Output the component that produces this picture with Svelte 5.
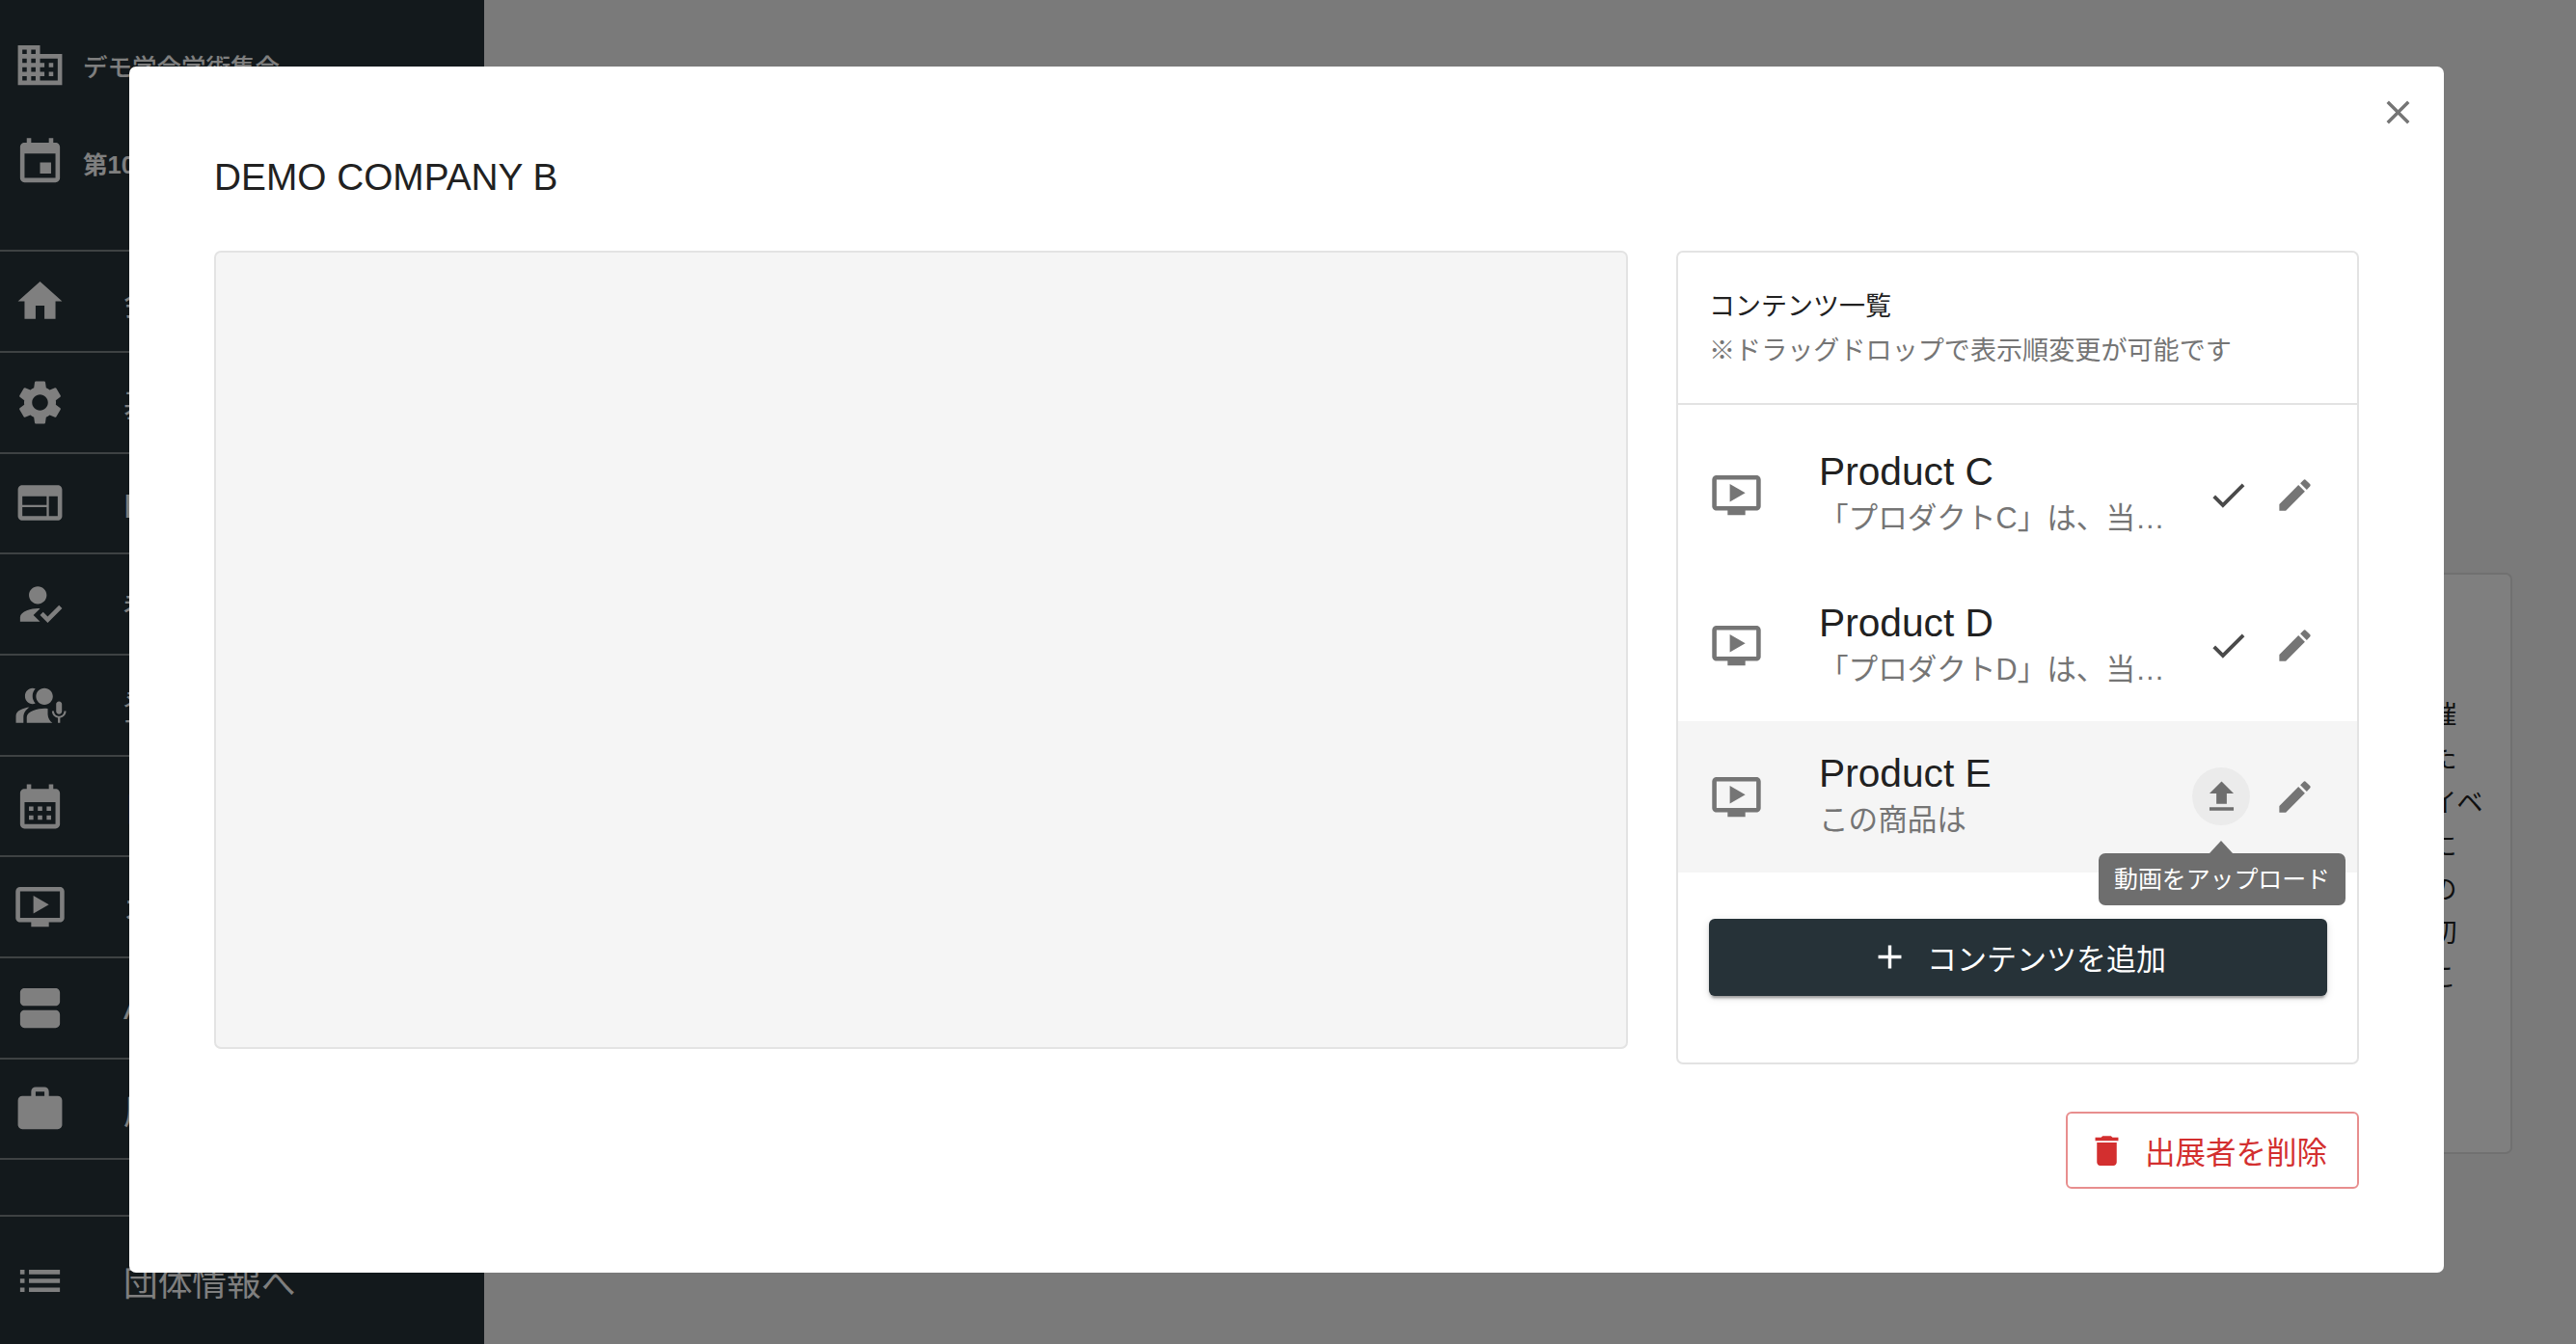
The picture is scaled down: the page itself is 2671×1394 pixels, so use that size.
<script>
  const icons = {
    domain: 'M12 7V3H2v18h20V7H12zM6 19H4v-2h2v2zm0-4H4v-2h2v2zm0-4H4V9h2v2zm0-4H4V5h2v2zm4 12H8v-2h2v2zm0-4H8v-2h2v2zm0-4H8V9h2v2zm0-4H8V5h2v2zm10 12h-8v-2h2v-2h-2v-2h2v-2h-2V9h8v10zm-2-8h-2v2h2v-2zm0 4h-2v2h2v-2z',
    event: 'M17 12h-5v5h5v-5zM16 1v2H8V1H6v2H5c-1.11 0-1.99.9-1.99 2L3 19c0 1.1.89 2 2 2h14c1.1 0 2-.9 2-2V5c0-1.1-.9-2-2-2h-1V1h-2zm3 18H5V8h14v11z',
    home: 'M10 20v-6h4v6h5v-8h3L12 3 2 12h3v8z',
    settings: 'M19.14 12.94c.04-.3.06-.61.06-.94 0-.32-.02-.64-.07-.94l2.03-1.58c.18-.14.23-.41.12-.61l-1.92-3.32c-.12-.22-.37-.29-.59-.22l-2.39.96c-.5-.38-1.03-.7-1.62-.94l-.36-2.54c-.04-.24-.24-.41-.48-.41h-3.84c-.24 0-.43.17-.47.41l-.36 2.54c-.59.24-1.13.57-1.62.94l-2.39-.96c-.22-.08-.47 0-.59.22L2.74 8.87c-.12.21-.08.47.12.61l2.03 1.58c-.05.3-.09.63-.09.94s.02.64.07.94l-2.03 1.58c-.18.14-.23.41-.12.61l1.92 3.32c.12.22.37.29.59.22l2.39-.96c.5.38 1.03.7 1.62.94l.36 2.54c.05.24.24.41.48.41h3.84c.24 0 .44-.17.47-.41l.36-2.54c.59-.24 1.13-.56 1.62-.94l2.39.96c.22.08.47 0 .59-.22l1.92-3.32c.12-.22.07-.47-.12-.61l-2.01-1.58zM12 15.6c-1.98 0-3.6-1.62-3.6-3.6s1.62-3.6 3.6-3.6 3.6 1.62 3.6 3.6-1.62 3.6-3.6 3.6z',
    web: 'M20 4H4c-1.1 0-1.99.9-1.99 2L2 18c0 1.1.9 2 2 2h16c1.1 0 2-.9 2-2V6c0-1.1-.9-2-2-2zm-5 14H4v-4h11v4zm0-5H4V9h11v4zm5 5h-4V9h4v9z',
    reg: 'M9 17l3-2.94c-.39-.04-.68-.06-1-.06-2.67 0-8 1.34-8 4v2h9l-3-3zm2-5c2.21 0 4-1.79 4-4s-1.79-4-4-4-4 1.79-4 4 1.79 4 4 4zM15.47 20.5L12 17l1.4-1.41 2.07 2.08 5.13-5.17 1.4 1.41z',
    speakers: 'M8.6 4.2c-1.9 0-3.4 1.6-3.4 3.6s1.5 3.6 3.4 3.6c.5 0 .9-.1 1.3-.3-.8-.9-1.3-2-1.3-3.3s.5-2.4 1.3-3.3c-.4-.2-.8-.3-1.3-.3zM14 4.2c-2.1 0-3.8 1.7-3.8 3.8s1.7 3.8 3.8 3.8 3.8-1.7 3.8-3.8-1.7-3.8-3.8-3.8zM7.2 12.9c-2.6.3-6.1 1.5-6.1 3.9v3.2h3.4v-2.6c0-1.9 1.1-3.3 2.7-4.5zM14 13.4c-2.8 0-8 1.4-8 3.9V20h11.6c-1.2-.9-2-2.3-2.1-3.9v-2.6c-.5-.1-1-.1-1.5-.1zM20.6 10.2c-.8 0-1.3.6-1.3 1.3v3.2c0 .7.5 1.3 1.3 1.3s1.3-.6 1.3-1.3v-3.2c0-.7-.5-1.3-1.3-1.3zM23.8 14.6h-.9c0 1.3-1 2.3-2.3 2.3s-2.3-1-2.3-2.3h-.9c0 1.6 1.2 2.9 2.7 3.1V20h1v-2.3c1.5-.2 2.7-1.5 2.7-3.1z',
    calendar: 'M19 4h-1V2h-2v2H8V2H6v2H5c-1.11 0-1.99.9-1.99 2L3 20c0 1.1.89 2 2 2h14c1.1 0 2-.9 2-2V6c0-1.1-.9-2-2-2zm0 16H5V10h14v10zM9 14H7v-2h2v2zm4 0h-2v-2h2v2zm4 0h-2v-2h2v2zm-8 4H7v-2h2v2zm4 0h-2v-2h2v2zm4 0h-2v-2h2v2z',
    video: 'M21 3H3c-1.11 0-2 .89-2 2v12c0 1.1.89 2 2 2h5v2h8v-2h5c1.1 0 1.99-.9 1.99-2L23 5c0-1.11-.9-2-2-2zm0 14H3V5h18v12zm-5-6l-7 4V7z',
    agenda: 'M19 13H5c-1.1 0-2 .9-2 2v4c0 1.1.9 2 2 2h14c1.1 0 2-.9 2-2v-4c0-1.1-.9-2-2-2zm0-10H5c-1.1 0-2 .9-2 2v4c0 1.1.9 2 2 2h14c1.1 0 2-.9 2-2V5c0-1.1-.9-2-2-2z',
    work: 'M20 6h-4V4c0-1.11-.89-2-2-2h-4c-1.11 0-2 .89-2 2v2H4c-1.11 0-1.99.89-1.99 2L2 19c0 1.11.89 2 2 2h16c1.11 0 2-.89 2-2V8c0-1.11-.89-2-2-2zm-6 0h-4V4h4v2z',
    list: 'M3 13h2v-2H3v2zm0 4h2v-2H3v2zm0-8h2V7H3v2zm4 4h14v-2H7v2zm0 4h14v-2H7v2zM7 7v2h14V7H7z',
    close: 'M19 6.41L17.59 5 12 10.59 6.41 5 5 6.41 10.59 12 5 17.59 6.41 19 12 13.41 17.59 19 19 17.59 13.41 12z',
    check: 'M9 16.17L4.83 12l-1.42 1.41L9 19 21 7l-1.41-1.41z',
    pencil: 'M3 17.25V21h3.75L17.81 9.94l-3.75-3.75L3 17.25zM20.71 7.04c.39-.39.39-1.02 0-1.41l-2.34-2.34c-.39-.39-1.02-.39-1.41 0l-1.83 1.83 3.75 3.75 1.83-1.83z',
    upload: 'M9 16h6v-6h4l-7-7-7 7h4zm-4 2h14v2H5z',
    plus: 'M19 13h-6v6h-2v-6H5v-2h6V5h2v6h6v2z',
    trash: 'M6 19c0 1.1.9 2 2 2h8c1.1 0 2-.9 2-2V7H6v12zM19 4h-3.5l-1-1h-5l-1 1H5v2h14V4z'
  };

  const navItems = [
    { icon: 'home', label: '会議' },
    { icon: 'settings', label: '基本設定' },
    { icon: 'web', label: 'HP編集' },
    { icon: 'reg', label: '参加者' },
    { icon: 'speakers', label: '登壇者' },
    { icon: 'calendar', label: '日程' },
    { icon: 'video', label: 'オンデマンド' },
    { icon: 'agenda', label: 'Ad' },
    { icon: 'work', label: '展示' }
  ];

  const bgLines = ['オンライン開催', '企画を作成した', '年次のウェブイベ', 'ントの案内時に', '各種資料などの', '受付登録の締切', 'の前日までにこ'];

  const contents = [
    { title: 'Product C', sub: '「プロダクトC」は、当社の新しい製品です', done: true },
    { title: 'Product D', sub: '「プロダクトD」は、当社の新しい製品です', done: true },
    { title: 'Product E', sub: 'この商品は', done: false }
  ];
</script>

{#snippet icon(name, cls)}
  <svg class={cls} viewBox="0 0 24 24" aria-hidden="true"><path d={icons[name]} /></svg>
{/snippet}

<div class="page" lang="ja">
  <aside class="sidebar">
    <div class="org">
      <div class="org-row">
        {@render icon('domain', 'nav-icon')}
        <span>デモ学会学術集会</span>
      </div>
      <div class="org-row strong">
        {@render icon('event', 'nav-icon')}
        <span>第10回学術集会</span>
      </div>
    </div>
    <nav>
      {#each navItems as item}
        <div class="nav-row">
          {@render icon(item.icon, 'nav-icon')}
          <span>{item.label}</span>
        </div>
      {/each}
    </nav>
    <div class="spacer"></div>
    <div class="back-row">
      {@render icon('list', 'nav-icon')}
      <span>団体情報へ</span>
    </div>
  </aside>

  <main class="main">
    <section class="bg-card">
      <div class="bg-head">
        <span>申込手</span>
        {@render icon('plus', 'bg-plus')}
      </div>
      {#each bgLines as line}
        <div class="bg-line">{line}</div>
      {/each}
    </section>
  </main>

  <div class="overlay">
    <div class="modal">
      <button class="close">{@render icon('close', 'close-icon')}</button>
      <h2>DEMO COMPANY B</h2>
      <div class="body">
        <div class="player"></div>
        <div class="panel">
          <header>
            <div class="panel-title">コンテンツ一覧</div>
            <div class="panel-note">※ドラッグドロップで表示順変更が可能です</div>
          </header>
          <ul>
            {#each contents as item}
              <li class:active={!item.done}>
                {@render icon('video', 'item-icon')}
                <div class="item-text">
                  <div class="item-title">{item.title}</div>
                  <div class="item-sub">{item.sub}</div>
                </div>
                <div class="slot">
                  {#if item.done}
                    {@render icon('check', 'check-icon')}
                  {:else}
                    <span class="upload-btn">{@render icon('upload', 'upload-icon')}</span>
                    <div class="tooltip">動画をアップロード</div>
                  {/if}
                </div>
                {@render icon('pencil', 'pencil-icon')}
              </li>
            {/each}
          </ul>
          <button class="add">
            {@render icon('plus', 'add-icon')}
            <span>コンテンツを追加</span>
          </button>
        </div>
      </div>
      <div class="footer">
        <button class="delete">
          {@render icon('trash', 'trash-icon')}
          <span>出展者を削除</span>
        </button>
      </div>
    </div>
  </div>
</div>

<style>
  :global(body) {
    margin: 0;
    font-family: "Liberation Sans", "Noto Sans CJK JP", sans-serif;
  }

  .page {
    display: flex;
    height: 1394px;
    overflow: hidden;
    background: #f5f5f5;
    color: #212121;
  }

  svg {
    display: block;
    flex: none;
    fill: currentColor;
  }

  .sidebar {
    width: 502px;
    flex: none;
    display: flex;
    flex-direction: column;
    background: #263238;
    color: #fff;
  }

  :global(.nav-icon) {
    width: 55px;
    height: 55px;
  }

  .org {
    height: 262px;
    box-sizing: border-box;
    padding-top: 17px;
    border-bottom: 2px solid rgba(255, 255, 255, 0.4);
  }

  .org-row {
    display: flex;
    align-items: center;
    gap: 17px;
    height: 101px;
    padding-left: 14px;
    font-size: 25.5px;
    font-weight: 500;
    white-space: nowrap;
  }

  .org-row.strong {
    font-weight: 700;
  }

  .nav-row {
    display: flex;
    align-items: center;
    gap: 59px;
    height: 104.7px;
    box-sizing: border-box;
    padding-left: 14px;
    border-bottom: 2px solid rgba(255, 255, 255, 0.4);
    font-size: 35.7px;
    white-space: nowrap;
  }

  .spacer {
    height: 57px;
    flex: none;
    border-bottom: 2px solid rgba(255, 255, 255, 0.4);
  }

  .back-row {
    display: flex;
    align-items: center;
    gap: 59px;
    height: 132px;
    padding-left: 14px;
    font-size: 35.7px;
    white-space: nowrap;
  }

  .main {
    flex: 1;
    display: flex;
    justify-content: flex-end;
    align-items: flex-start;
    padding: 594px 66px 0 0;
  }

  .bg-card {
    width: 400px;
    height: 603px;
    box-sizing: border-box;
    padding: 55px 0 0 150px;
    background: #fff;
    border: 2px solid rgba(0, 0, 0, 0.12);
    border-radius: 7px;
    font-size: 27.2px;
    line-height: 45.3px;
    white-space: nowrap;
  }

  .bg-head {
    display: flex;
    align-items: center;
    height: 41px;
    margin-bottom: 27px;
    color: #263238;
  }

  :global(.bg-plus) {
    width: 41px;
    height: 41px;
    margin-left: -12px;
  }

  .overlay {
    position: fixed;
    inset: 0;
    background: rgba(0, 0, 0, 0.5);
    padding: 69px 0 0 134px;
  }

  .modal {
    position: relative;
    width: 2400px;
    height: 1251px;
    box-sizing: border-box;
    padding: 91px 88px 0;
    background: #fff;
    border-radius: 7px;
  }

  .close {
    position: absolute;
    top: 27px;
    right: 27px;
    padding: 0;
    border: 0;
    background: none;
    color: #757575;
  }

  :global(.close-icon) {
    width: 41px;
    height: 41px;
  }

  h2 {
    margin: 0 0 52px;
    font-size: 38.8px;
    font-weight: 400;
    line-height: 48px;
  }

  .body {
    display: flex;
    align-items: flex-start;
    gap: 50px;
  }

  .player {
    width: 1466px;
    height: 828px;
    box-sizing: border-box;
    background: #f5f5f5;
    border: 2px solid #e3e3e3;
    border-radius: 7px;
  }

  .panel {
    width: 708px;
    height: 844px;
    box-sizing: border-box;
    border: 2px solid #e3e3e3;
    border-radius: 7px;
  }

  header {
    height: 158px;
    box-sizing: border-box;
    padding: 34px 32px 0;
    border-bottom: 2px solid #e3e3e3;
  }

  .panel-title {
    font-size: 27px;
    line-height: 45px;
  }

  .panel-note {
    font-size: 27.1px;
    line-height: 45px;
    color: #757575;
  }

  ul {
    list-style: none;
    margin: 0;
    padding: 15px 0 0;
  }

  li {
    position: relative;
    display: flex;
    align-items: center;
    height: 156.5px;
    padding: 0 43px 0 33px;
  }

  li.active {
    background: #f5f5f5;
  }

  :global(.item-icon) {
    width: 55px;
    height: 55px;
    color: #757575;
  }

  .item-text {
    width: 379px;
    margin: 0 0 0 58px;
    flex: none;
  }

  .item-title {
    font-size: 40.7px;
    line-height: 48px;
  }

  .item-sub {
    font-size: 30.6px;
    line-height: 48px;
    color: #757575;
    white-space: nowrap;
    overflow: hidden;
    text-overflow: ellipsis;
  }

  .slot {
    width: 60px;
    margin-left: auto;
    display: flex;
    justify-content: flex-end;
    flex: none;
  }

  :global(.check-icon) {
    width: 45px;
    height: 45px;
    color: #4a4a4a;
  }

  :global(.pencil-icon) {
    width: 43px;
    height: 43px;
    margin-left: 25px;
    color: #757575;
  }

  .upload-btn {
    display: flex;
    align-items: center;
    justify-content: center;
    width: 60px;
    height: 60px;
    border-radius: 50%;
    background: #ebebeb;
    color: #6e6e6e;
  }

  :global(.upload-icon) {
    width: 43px;
    height: 43px;
  }

  .tooltip {
    position: absolute;
    top: 137px;
    right: 12px;
    width: 256px;
    height: 54px;
    box-sizing: border-box;
    border-radius: 7px;
    background: #6e6e6e;
    color: #fff;
    font-size: 24.9px;
    line-height: 54px;
    text-align: center;
    white-space: nowrap;
  }

  .tooltip::before {
    content: '';
    position: absolute;
    left: 115px;
    top: -13px;
    border-left: 12px solid transparent;
    border-right: 12px solid transparent;
    border-bottom: 13px solid #6e6e6e;
  }

  button {
    font: inherit;
  }

  .add {
    display: flex;
    align-items: center;
    justify-content: center;
    gap: 18px;
    width: 641px;
    height: 80px;
    margin: 48px 0 0 32px;
    padding: 0;
    border: 0;
    border-radius: 6px;
    background: #263238;
    color: #fff;
    font-size: 31px;
    box-shadow: 0 5px 2px -3px rgba(0, 0, 0, 0.2), 0 3px 3px rgba(0, 0, 0, 0.14), 0 2px 8px rgba(0, 0, 0, 0.12);
  }

  :global(.add-icon) {
    width: 41px;
    height: 41px;
  }

  .footer {
    display: flex;
    justify-content: flex-end;
    margin-top: 49px;
  }

  .delete {
    display: flex;
    align-items: center;
    gap: 19px;
    width: 304px;
    height: 80px;
    box-sizing: border-box;
    padding: 0 0 0 20px;
    border: 2px solid #e88e8e;
    border-radius: 6px;
    background: #fff;
    color: #d32f2f;
    font-size: 31.5px;
    white-space: nowrap;
  }

  :global(.trash-icon) {
    width: 41px;
    height: 41px;
  }
</style>
